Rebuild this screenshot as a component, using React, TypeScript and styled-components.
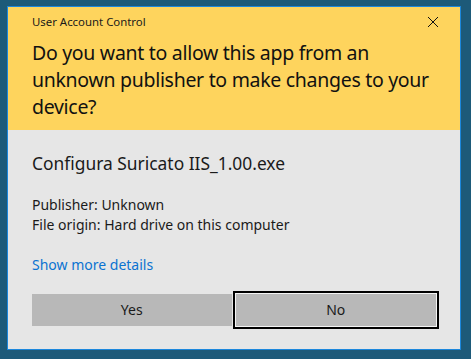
import styled, { createGlobalStyle } from "styled-components";

const GlobalStyle = createGlobalStyle`
  html, body {
    margin: 0;
    padding: 0;
    background: #1d5a79;
  }
  body {
    font-family: "Noto Sans", "Open Sans", sans-serif;
  }
`;

const Page = styled.div`
  width: 471px;
  height: 359px;
  padding: 6px 0 0 7px;
  box-sizing: border-box;
`;

const Dialog = styled.div`
  width: 454px;
  height: 344px;
  box-sizing: border-box;
  border: 1px solid #1c87dc;
  background: #e6e6e6;
  display: flex;
  flex-direction: column;
`;

const Header = styled.div`
  background: #fed45d;
  height: 123px;
  box-sizing: border-box;
  padding: 7px 24px 0 24px;
`;

const TitleRow = styled.div`
  display: flex;
  justify-content: space-between;
  align-items: center;
  height: 16px;
`;

const Caption = styled.span`
  font-size: 11.4px;
  line-height: 16px;
  color: #1a1a1a;
`;

const CloseButton = styled.button`
  all: unset;
  cursor: pointer;
  width: 12px;
  height: 12px;
  margin-right: -3px;
  display: flex;

  svg {
    width: 12px;
    height: 12px;
  }
`;

const Heading = styled.h1`
  margin: 9px 0 0 0;
  font-size: 19.5px;
  font-weight: 400;
  letter-spacing: -0.3px;
  line-height: 27px;
  color: #111;
`;

const Body = styled.div`
  padding: 22px 24px 0 24px;
  display: flex;
  flex-direction: column;
`;

const AppName = styled.p`
  margin: 0;
  font-size: 17.4px;
  line-height: 22px;
  color: #1a1a1a;
`;

const Meta = styled.div`
  margin-top: 21px;
  font-size: 14px;
  line-height: 20px;
  color: #1a1a1a;
`;

const DetailsLink = styled.a`
  margin-top: 20px;
  font-size: 14px;
  line-height: 20px;
  color: #0b73d1;
  text-decoration: none;
  cursor: pointer;
  align-self: flex-start;
`;

const ButtonRow = styled.div`
  margin-top: 19px;
  display: flex;
  gap: 4px;
`;

const DialogButton = styled.button<{ $focused?: boolean }>`
  all: unset;
  cursor: pointer;
  box-sizing: border-box;
  width: ${({ $focused }) => ($focused ? "201px" : "200px")};
  height: 32px;
  background: #b8b8b8;
  color: #1a1a1a;
  font-family: "Noto Sans", "Open Sans", sans-serif;
  font-size: 14px;
  text-align: center;
  line-height: 32px;
  box-shadow: ${({ $focused }) =>
    $focused ? "0 0 0 1px #f4f4f4, 0 0 0 3px #000" : "none"};
`;

export default function App() {
  return (
    <>
      <GlobalStyle />
      <Page>
        <Dialog>
          <Header>
            <TitleRow>
              <Caption>User Account Control</Caption>
              <CloseButton aria-label="Close">
                <svg viewBox="0 0 12 12">
                  <path
                    d="M1 1 L11 11 M11 1 L1 11"
                    stroke="#111"
                    strokeWidth="1"
                    fill="none"
                  />
                </svg>
              </CloseButton>
            </TitleRow>
            <Heading>
              Do you want to allow this app from an unknown publisher to make
              changes to your device?
            </Heading>
          </Header>
          <Body>
            <AppName>Configura Suricato IIS_1.00.exe</AppName>
            <Meta>
              Publisher: Unknown
              <br />
              File origin: Hard drive on this computer
            </Meta>
            <DetailsLink>Show more details</DetailsLink>
            <ButtonRow>
              <DialogButton>Yes</DialogButton>
              <DialogButton $focused>No</DialogButton>
            </ButtonRow>
          </Body>
        </Dialog>
      </Page>
    </>
  );
}
